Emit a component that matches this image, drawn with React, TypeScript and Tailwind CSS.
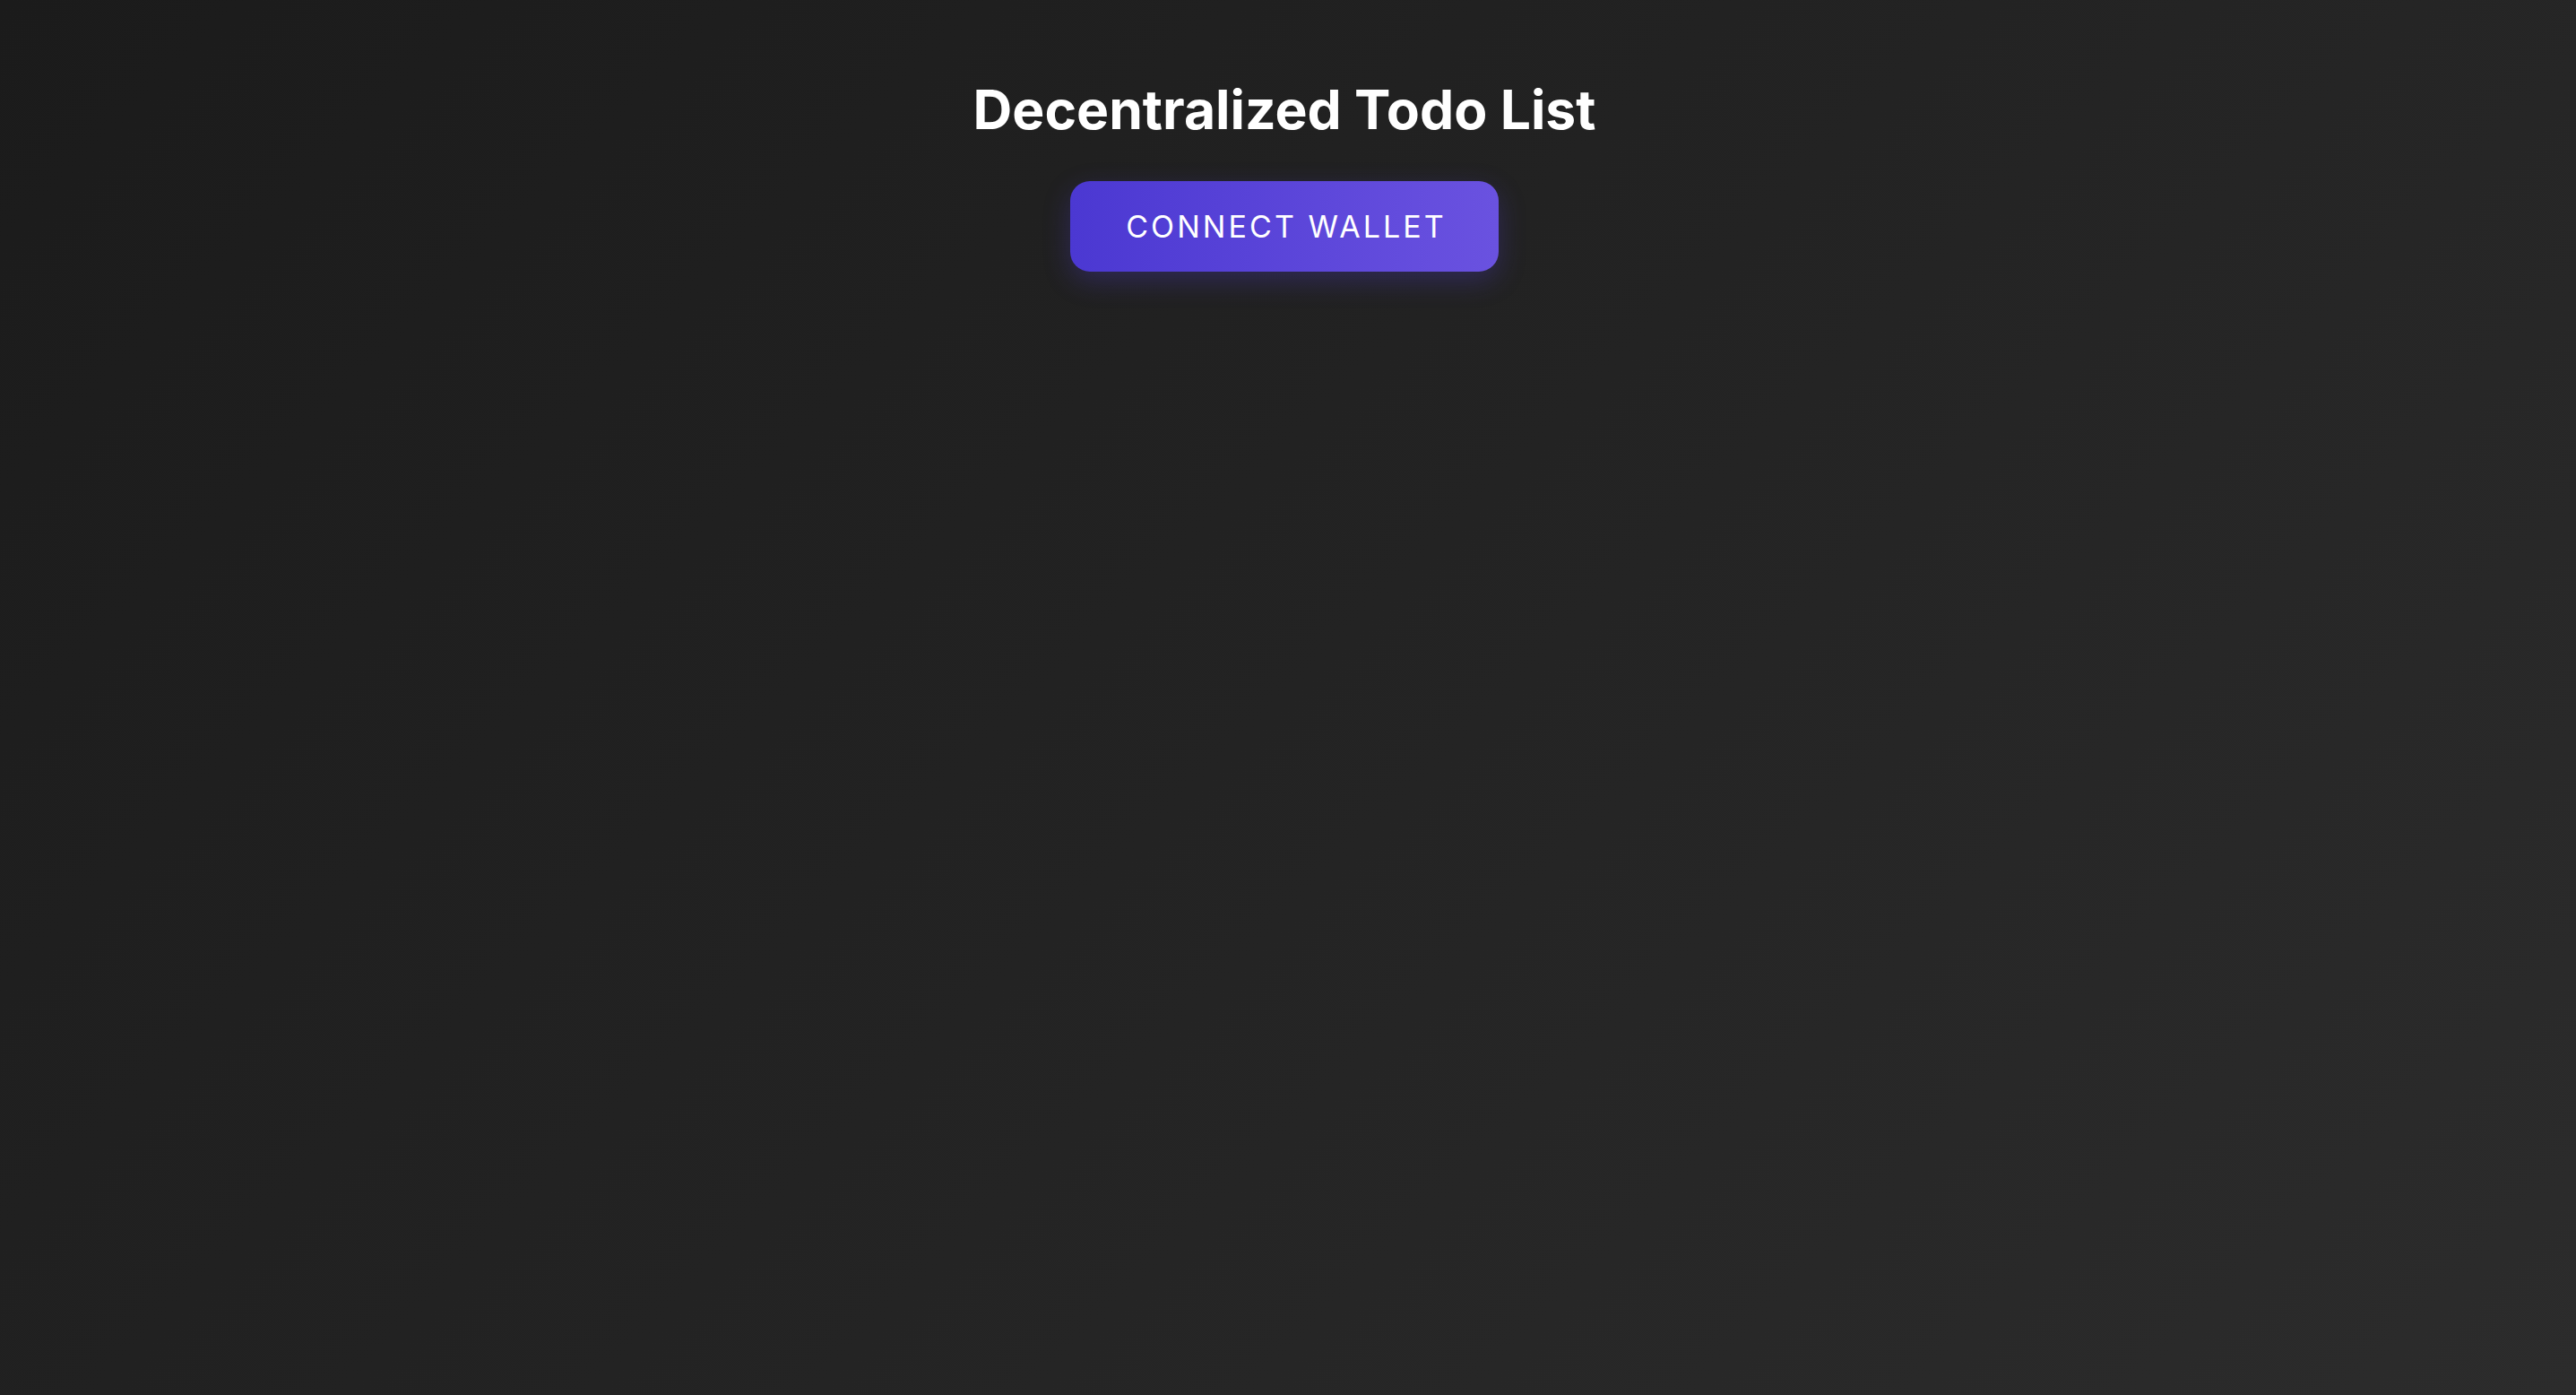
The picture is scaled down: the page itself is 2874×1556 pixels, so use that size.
export default function App() {
  return (
    <div className="min-h-screen w-full bg-[linear-gradient(135deg,#1b1b1b_0%,#232323_50%,#2c2c2c_100%)] font-['Inter','Liberation_Sans',sans-serif] text-white">
      <div className="flex flex-col items-center pt-[86px] pr-[8px]">
        <h1 className="text-[60.6px] leading-[72px] font-bold">
          Decentralized Todo List
        </h1>
        <button className="mt-[44px] h-[101px] pl-[62px] pr-[58px] rounded-[22px] bg-[linear-gradient(90deg,#4b38d2,#6a52e0)] text-[34px] tracking-[0.09em] text-white shadow-[0_10px_30px_rgba(80,60,210,0.3)] cursor-pointer">
          CONNECT WALLET
        </button>
      </div>
    </div>
  );
}
